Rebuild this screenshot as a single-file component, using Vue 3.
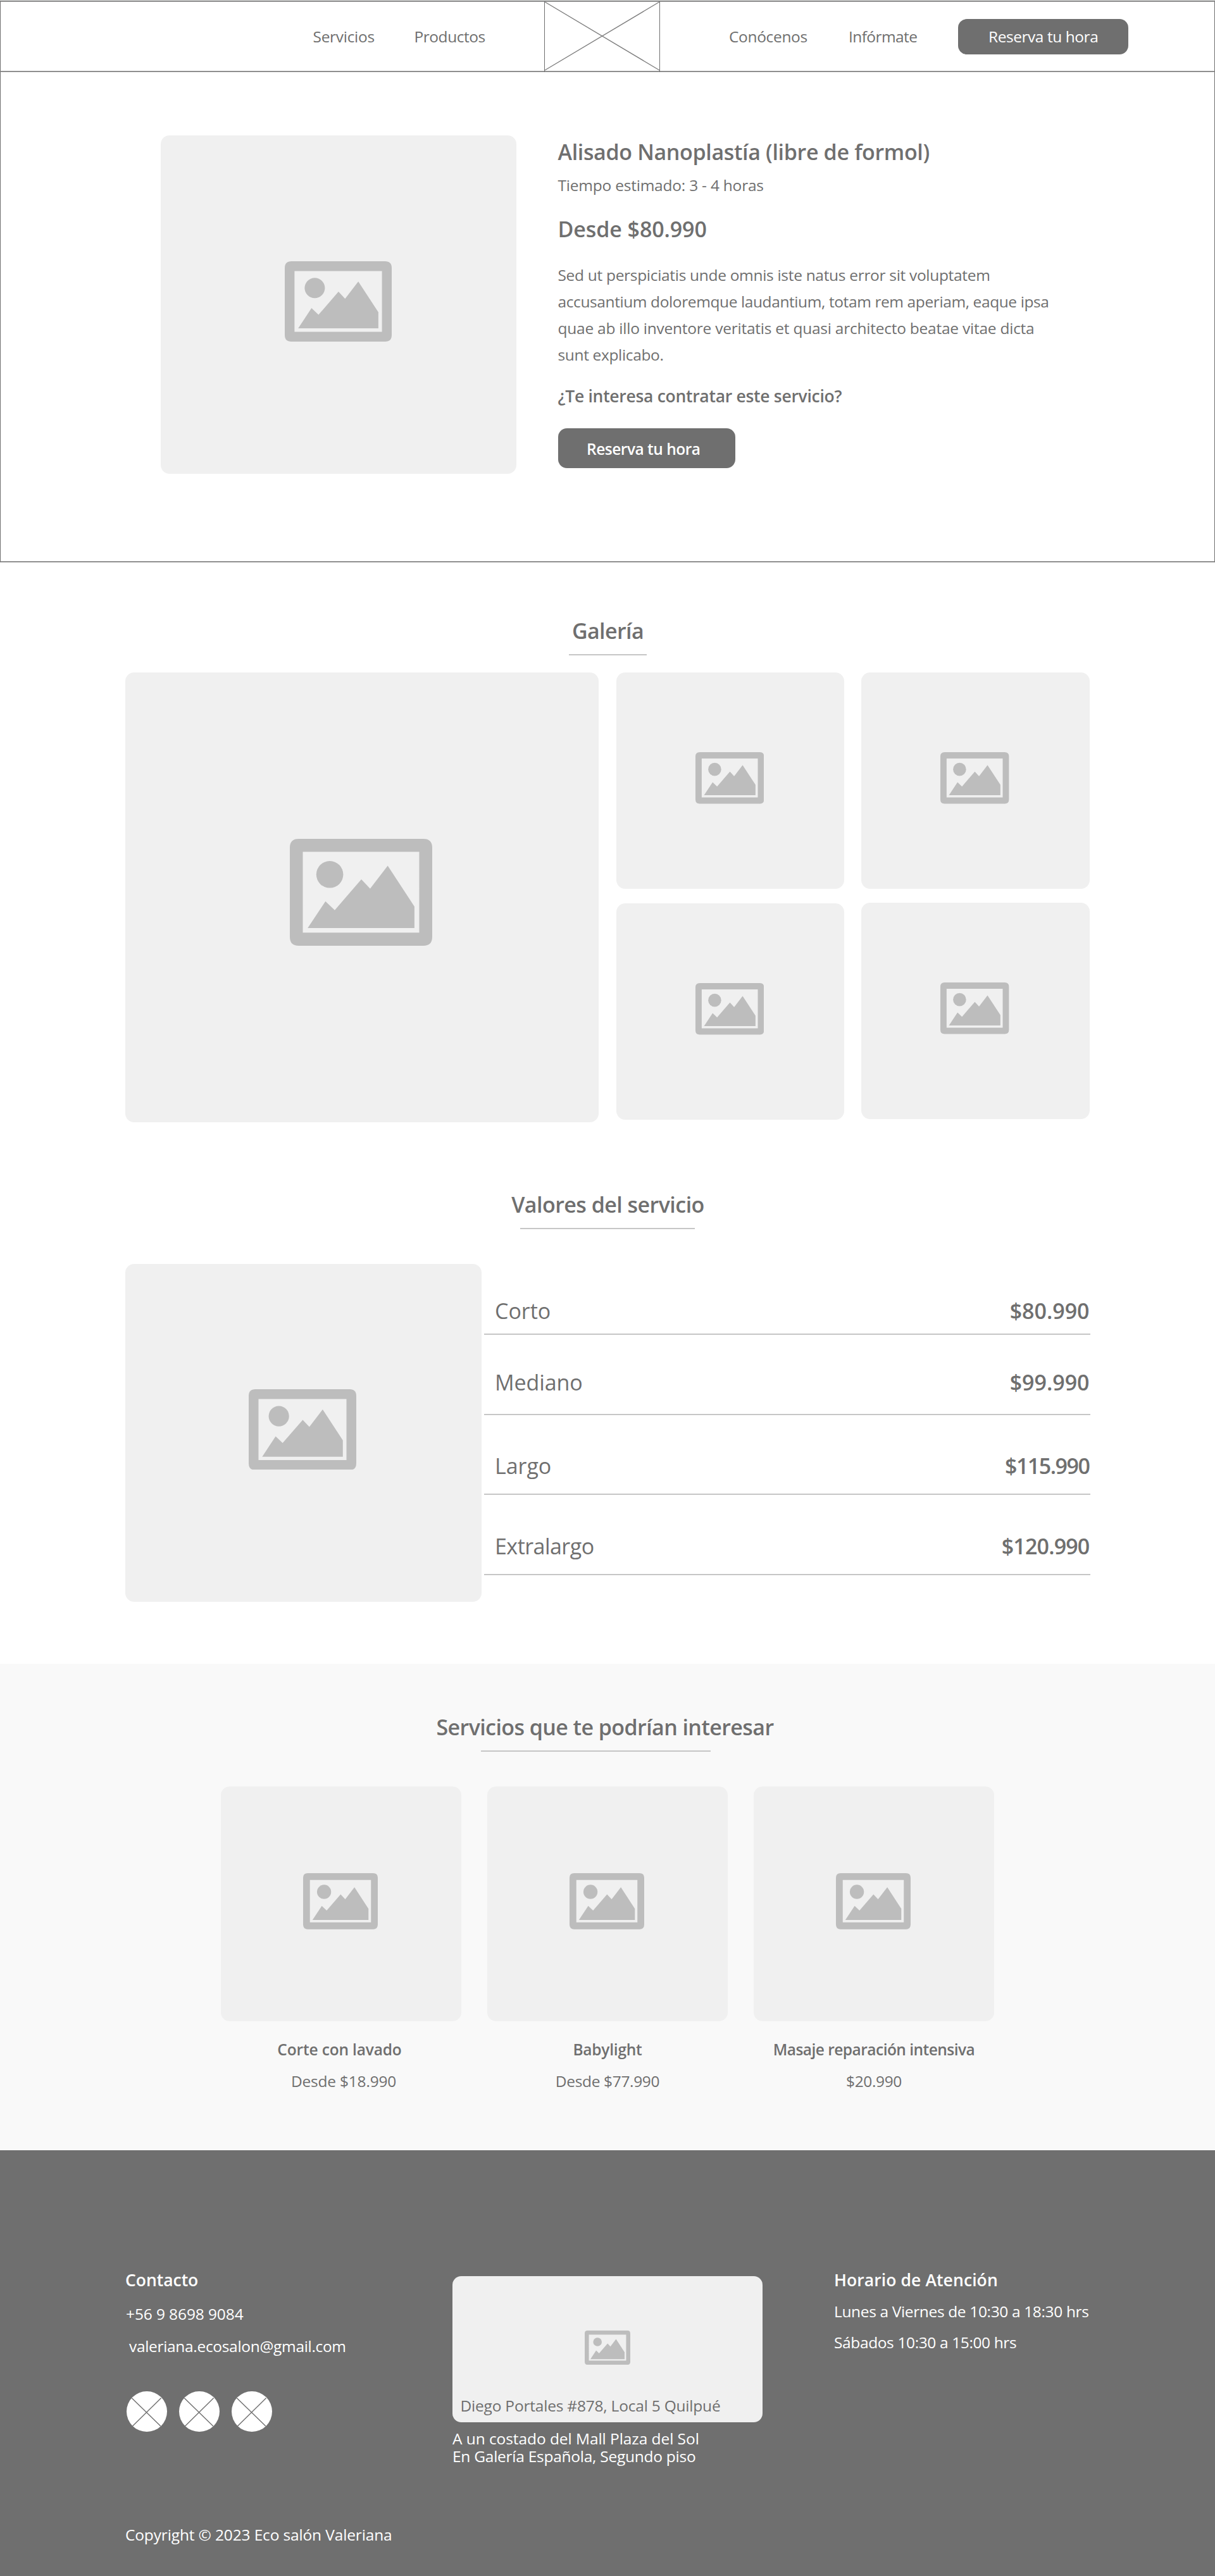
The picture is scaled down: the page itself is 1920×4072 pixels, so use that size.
<script setup>
import { h } from 'vue'

const PictureIcon = (props) =>
  h('svg', { viewBox: '0 0 169 127', width: props.width, height: (props.width * 127) / 169, 'aria-hidden': 'true' }, [
    h('path', {
      fill: '#bdbdbd',
      'fill-rule': 'evenodd',
      d: 'M10.5 0H158.500Q169 0 169 10.500V116.500Q169 127 158.500 127H10.500Q0 127 0 116.500V10.500Q0 0 10.500 0ZM15.400 15.400V111.400H153.600V15.400ZM21.200 106L42.300 74.100L53.300 84.600L84.900 48.100L95.300 59.200L116.200 31.900L147.900 80.400V106Z',
    }),
    h('circle', { cx: 47.4, cy: 42.3, r: 16, fill: '#bdbdbd' }),
  ])
PictureIcon.props = ['width']

const description = [
  { text: 'Sed ut perspiciatis unde omnis iste natus error sit voluptatem', spacing: -0.31 },
  { text: 'accusantium doloremque laudantium, totam rem aperiam, eaque ipsa', spacing: -0.4 },
  { text: 'quae ab illo inventore veritatis et quasi architecto beatae vitae dicta', spacing: -0.24 },
  { text: 'sunt explicabo.', spacing: -0.35 },
]

const prices = [
  { name: 'Corto', price: '$80.990', nameSpacing: -0.02, priceSpacing: -0.02 },
  { name: 'Mediano', price: '$99.990', nameSpacing: -0.08, priceSpacing: -0.02 },
  { name: 'Largo', price: '$115.990', nameSpacing: -0.05, priceSpacing: -1.48 },
  { name: 'Extralargo', price: '$120.990', nameSpacing: -0.53, priceSpacing: -0.82 },
]

const related = [
  { name: 'Corte con lavado', price: 'Desde $18.990', nameSpacing: -0.16, priceSpacing: -0.21 },
  { name: 'Babylight', price: 'Desde $77.990', nameSpacing: -0.23, priceSpacing: -0.34 },
  { name: 'Masaje reparación intensiva', price: '$20.990', nameSpacing: -0.53, priceSpacing: -0.38 },
]

const track = (value) => ({ letterSpacing: value + 'px' })
</script>

<template>
  <div class="page">
    <header class="header">
      <a class="link servicios">Servicios</a>
      <a class="link productos">Productos</a>
      <svg class="logo" width="183" height="112" viewBox="0 0 183 112" fill="none" stroke="#6f6f6f">
        <path d="M.5 0V112M182.500 0V112" />
        <path d="M1 1L182 109M1 109L182 1" stroke="#7d7d7d" stroke-width="1.400" />
      </svg>
      <a class="link conocenos">Conócenos</a>
      <a class="link informate">Infórmate</a>
      <a class="button nav-button">Reserva tu hora</a>
    </header>

    <section class="hero">
      <div class="placeholder hero-image"><PictureIcon :width="169" /></div>
      <div class="hero-info">
        <h1 class="heading">Alisado Nanoplastía (libre de formol)</h1>
        <p class="time">Tiempo estimado: 3 - 4 horas</p>
        <p class="heading from-price">Desde $80.990</p>
        <p class="description">
          <span v-for="line in description" :key="line.text" :style="track(line.spacing)">{{ line.text }}</span>
        </p>
        <p class="question">¿Te interesa contratar este servicio?</p>
        <a class="button hero-button">Reserva tu hora</a>
      </div>
    </section>

    <section class="gallery">
      <h2 class="heading gallery-title">Galería</h2>
      <div class="rule gallery-rule"></div>
      <div class="gallery-grid">
        <div class="placeholder big"><PictureIcon :width="225" /></div>
        <div class="column first">
          <div class="placeholder small"><PictureIcon :width="108.4" /></div>
          <div class="placeholder small"><PictureIcon :width="108.4" /></div>
        </div>
        <div class="column second">
          <div class="placeholder small"><PictureIcon :width="108.4" /></div>
          <div class="placeholder small"><PictureIcon :width="108.4" /></div>
        </div>
      </div>
    </section>

    <section class="values">
      <h2 class="heading values-title">Valores del servicio</h2>
      <div class="rule values-rule"></div>
      <div class="values-body">
        <div class="placeholder values-image"><PictureIcon :width="170" /></div>
        <ul class="price-list">
          <li v-for="row in prices" :key="row.name" class="price-row">
            <span class="price-name" :style="track(row.nameSpacing)">{{ row.name }}</span>
            <span class="price-value" :style="track(row.priceSpacing)">{{ row.price }}</span>
          </li>
        </ul>
      </div>
    </section>

    <section class="related">
      <h2 class="heading related-title">Servicios que te podrían interesar</h2>
      <div class="rule related-rule"></div>
      <div class="related-grid">
        <article v-for="item in related" :key="item.name" class="service">
          <div class="placeholder service-image"><PictureIcon :width="118" /></div>
          <h3 class="service-name" :style="track(item.nameSpacing)">{{ item.name }}</h3>
          <p class="service-price" :style="track(item.priceSpacing)">{{ item.price }}</p>
        </article>
      </div>
    </section>

    <footer class="footer">
      <div class="footer-columns">
        <div class="contact">
          <h4 class="footer-title contact-title">Contacto</h4>
          <p class="phone">+56 9 8698 9084</p>
          <p class="email">valeriana.ecosalon@gmail.com</p>
          <div class="socials">
            <svg v-for="n in 3" :key="n" width="64" height="64" viewBox="0 0 64 64">
              <circle cx="32" cy="32" r="32" fill="#fff" />
              <path d="M8.300 10.700L54 55.300M9.300 55.300L54.700 10.500" stroke="#6f6f6f" stroke-width="1.400" />
            </svg>
          </div>
        </div>
        <div class="location">
          <div class="placeholder map">
            <PictureIcon :width="72" />
            <p class="address">Diego Portales #878, Local 5 Quilpué</p>
          </div>
          <p class="directions">
            <span class="mall">A un costado del Mall Plaza del Sol</span>
            <span class="arcade">En Galería Española, Segundo piso</span>
          </p>
        </div>
        <div class="hours">
          <h4 class="footer-title hours-title">Horario de Atención</h4>
          <p class="weekdays">Lunes a Viernes de 10:30 a 18:30 hrs</p>
          <p class="saturday">Sábados 10:30 a 15:00 hrs</p>
        </div>
      </div>
      <p class="copyright">Copyright © 2023 Eco salón Valeriana</p>
    </footer>
  </div>
</template>

<style>
body {
  margin: 0;
}
</style>

<style scoped>
.page {
  box-sizing: border-box;
  width: 1920px;
  height: 4072px;
  border-top: 1px solid #dcdfdc;
  background: #fff;
  color: #6f6f6f;
  font-family: 'Open Sans', 'Noto Sans', sans-serif;
  font-size: 24.5px;
  line-height: 40px;
  white-space: nowrap;
}
h1, h2, h3, h4, p, ul {
  margin: 0;
  padding: 0;
  font-size: inherit;
  font-weight: 400;
}
li {
  list-style: none;
}
.heading {
  font-size: 34px;
  font-weight: 600;
  line-height: 48px;
}
.rule {
  height: 2px;
  background: #c6c6c6;
}
.placeholder {
  box-sizing: border-box;
  display: grid;
  place-items: center;
  border-radius: 14px;
  background: #f0f0f0;
}
.button {
  box-sizing: border-box;
  display: block;
  border-radius: 14px;
  background: #6f6f6f;
  color: #fff;
}

.header {
  box-sizing: border-box;
  height: 113px;
  display: grid;
  grid-template-columns: 160px 205.5px 292px 189px 173px 268.5px;
  align-items: center;
  padding-left: 493.5px;
  border: solid;
  border-width: 2px 1px;
  border-color: #8f8f8f #6f6f6f;
}
.logo {
  display: block;
  margin: -1px 0;
}
.servicios { letter-spacing: -0.29px; }
.productos { letter-spacing: -0.46px; }
.conocenos { letter-spacing: -0.34px; }
.informate { letter-spacing: -0.59px; }
.nav-button {
  height: 56px;
  margin-top: -1px;
  padding: 8px 0 0 48px;
  letter-spacing: -0.45px;
}

.hero {
  box-sizing: border-box;
  height: 775px;
  display: flex;
  padding: 100px 0 0 253px;
  border: solid;
  border-width: 0 1px 2px;
  border-color: #8f8f8f #6f6f6f;
}
.hero-image {
  width: 562px;
  height: 535px;
  padding: 0 2px 11px 0;
}
.hero-info {
  margin-left: 65.5px;
  padding-top: 2px;
}
.hero-info h1 { letter-spacing: -0.35px; }
.time {
  margin-top: 8.5px;
  letter-spacing: -0.22px;
}
.from-price {
  margin-top: 25px;
  letter-spacing: -0.1px;
}
.description {
  margin-top: 28.200px;
  line-height: 42.150px;
}
.description span,
.directions span {
  display: block;
}
.question {
  margin-top: 23.700px;
  font-size: 26.5px;
  font-weight: 600;
  letter-spacing: -0.29px;
}
.hero-button {
  width: 280px;
  height: 63px;
  margin-top: 31px;
  padding: 13px 0 0 45.5px;
  font-weight: 600;
  letter-spacing: -0.5px;
}

.gallery-title {
  padding: 84px 0 0 1px;
  text-align: center;
  letter-spacing: -0.6px;
}
.gallery-rule {
  width: 123px;
  margin: 13px 0 0 899px;
}
.gallery-grid {
  display: flex;
  margin-top: 27px;
  padding-left: 198px;
}
.big {
  width: 748px;
  height: 711px;
  padding: 0 4px 15px 0;
}
.column {
  display: flex;
  flex-direction: column;
}
.column.first {
  width: 360px;
  gap: 23px;
  margin-left: 28px;
}
.column.second {
  width: 361px;
  gap: 22px;
  margin-left: 27px;
}
.small {
  height: 342px;
  padding: 0 2px 8px 0;
}

.values-title {
  padding-top: 105.5px;
  padding-left: 1px;
  text-align: center;
  letter-spacing: -0.54px;
}
.values-rule {
  width: 276px;
  margin: 13.500px 0 0 822px;
}
.values-body {
  display: flex;
  margin-top: 55px;
  padding-left: 198px;
}
.values-image {
  width: 563px;
  height: 534px;
  padding: 0 4px 11px 0;
}
.price-list {
  width: 958px;
  margin-left: 4px;
}
.price-row {
  display: flex;
  justify-content: space-between;
  padding: 56.500px 1.500px 20px 17px;
  border-bottom: 2px solid #c6c6c6;
  font-size: 34px;
  line-height: 48px;
}
.price-row:nth-child(1) { padding-top: 50px; padding-bottom: 12px; }
.price-row:nth-child(2) { padding-top: 51px; padding-bottom: 25.500px; }
.price-value {
  font-weight: 600;
}

.related {
  box-sizing: border-box;
  height: 769px;
  margin-top: 98px;
  padding-top: 76px;
  background: #f9f9f9;
}
.related-title {
  padding-right: 8px;
  text-align: center;
  letter-spacing: -0.58px;
}
.related-rule {
  width: 363px;
  margin: 13px 0 0 760px;
}
.related-grid {
  display: flex;
  gap: 41px;
  margin-top: 55px;
  padding-left: 349px;
}
.service {
  width: 380px;
  text-align: center;
}
.service-image {
  height: 371px;
  padding: 0 2px 8px 0;
}
.service-name {
  margin-top: 24.500px;
  font-weight: 600;
}
.service-price {
  margin-top: 10.500px;
}
.service:first-child .service-name { padding-right: 5px; }
.service:first-child .service-price { padding-left: 8px; }

.footer {
  box-sizing: border-box;
  height: 673px;
  padding: 185px 0 0 198px;
  background: #6f6f6f;
  color: #fff;
}
.footer-columns {
  display: flex;
  height: 402.500px;
}
.footer-title {
  font-size: 26.5px;
  font-weight: 600;
}
.contact { width: 517px; }
.contact-title { letter-spacing: -0.03px; }
.phone {
  margin: 14px 0 0 1px;
  letter-spacing: -0.11px;
}
.email {
  margin: 11px 0 0 6px;
  letter-spacing: -0.32px;
}
.socials {
  display: flex;
  gap: 19.400px;
  margin: 51px 0 0 1.500px;
}
.location {
  width: 603px;
  padding-top: 14px;
}
.map {
  width: 490px;
  height: 231px;
  color: #6f6f6f;
}
.map > * {
  grid-area: 1 / 1;
}
.map svg {
  margin-bottom: 5px;
}
.address {
  place-self: end start;
  padding: 0 0 6px 12.500px;
  letter-spacing: -0.21px;
}
.directions {
  margin-top: 11.500px;
  line-height: 28.700px;
}
.mall { letter-spacing: -0.07px; }
.arcade { letter-spacing: -0.26px; }
.hours-title { letter-spacing: 0.09px; }
.weekdays {
  margin-top: 10px;
  letter-spacing: -0.36px;
}
.saturday {
  margin-top: 9px;
  letter-spacing: -0.38px;
}
.copyright {
  letter-spacing: -0.15px;
}
</style>
